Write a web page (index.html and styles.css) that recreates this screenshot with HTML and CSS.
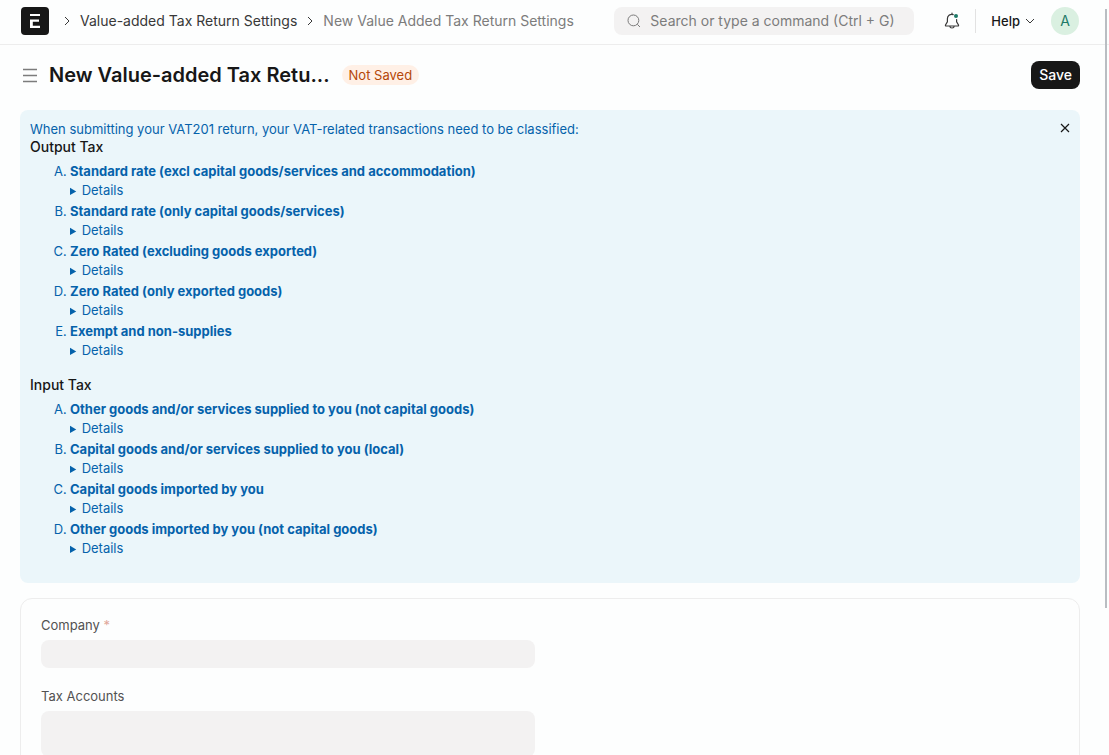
FILE: index.html
```html
<!DOCTYPE html>
<html lang="en">
<head>
<meta charset="utf-8">
<meta name="viewport" content="width=device-width, initial-scale=1">
<title>New Value-added Tax Return Settings</title>
<link rel="stylesheet" href="styles.css">
</head>
<body>
<header class="navbar">
  <a class="logo" href="#" aria-label="Home">
    <svg width="28" height="28" viewBox="0 0 28 28"><rect width="28" height="28" rx="4" fill="#171717"/><path d="M9 7h10v2H9zM9 12.5h9v2.3h-6.2v4H19V21H9z" fill="#fff"/></svg>
  </a>
  <nav class="breadcrumbs" aria-label="Breadcrumb">
    <svg class="crumb-arrow" width="6" height="10" viewBox="0 0 6 10"><path d="M1 1l4 4-4 4"/></svg>
    <a href="#">Value-added Tax Return Settings</a>
    <svg class="crumb-arrow" width="6" height="10" viewBox="0 0 6 10"><path d="M1 1l4 4-4 4"/></svg>
    <a class="current" href="#" aria-current="page">New Value Added Tax Return Settings</a>
  </nav>
  <div class="nav-tools">
    <label class="search">
      <svg width="14" height="14" viewBox="0 0 14 14"><circle cx="6.4" cy="6.4" r="5.4"/><path d="M10.3 10.3l2.7 2.7"/></svg>
      <input type="text" aria-label="Search" placeholder="Search or type a command (Ctrl + G)">
    </label>
    <button class="bell" type="button" aria-label="Notifications">
      <svg width="16" height="18" viewBox="0 0 16 18"><path d="M9.2 2.6C5.8 1.7 3.4 3.9 3.4 6.8v3L1.5 13c-.2.6 0 1 .6 1h11.8c.6 0 .8-.4.6-1l-1.9-3.2V7.6M8 2.2V1M5.8 14.2c.2 2.4 4.2 2.4 4.4 0" fill="none" stroke="#383838" stroke-width="1.2" stroke-linecap="round"/><circle cx="12" cy="4" r="2" fill="#1e7a68"/></svg>
    </button>
    <button class="help" type="button">Help <svg width="10" height="6" viewBox="0 0 10 6"><path d="M1 1l4 4 4-4"/></svg></button>
    <button class="avatar" type="button" aria-label="Account">A</button>
  </div>
</header>
<main class="page">
  <div class="page-head">
    <button class="menu" type="button" aria-label="Toggle sidebar"><svg width="14" height="15" viewBox="0 0 14 15"><path d="M0 1.5h14M0 7.5h14M0 13.5h14"/></svg></button>
    <h1>New Value-added Tax Retu...</h1>
    <span class="pill">Not Saved</span>
    <button class="save" type="button">Save</button>
  </div>
  <section class="message">
    <button class="close" type="button" aria-label="Close"><svg width="10" height="10" viewBox="0 0 10 10"><path d="M1 1l8 8M9 1L1 9"/></svg></button>
    <p>When submitting your VAT201 return, your VAT-related transactions need to be classified:</p>
    <h2>Output Tax</h2>
    <ol>
      <li><strong>Standard rate (excl capital goods/services and accommodation)</strong><details><summary>Details</summary></details></li>
      <li><strong>Standard rate (only capital goods/services)</strong><details><summary>Details</summary></details></li>
      <li><strong>Zero Rated (excluding goods exported)</strong><details><summary>Details</summary></details></li>
      <li><strong>Zero Rated (only exported goods)</strong><details><summary>Details</summary></details></li>
      <li><strong>Exempt and non-supplies</strong><details><summary>Details</summary></details></li>
    </ol>
    <h2>Input Tax</h2>
    <ol>
      <li><strong>Other goods and/or services supplied to you (not capital goods)</strong><details><summary>Details</summary></details></li>
      <li><strong>Capital goods and/or services supplied to you (local)</strong><details><summary>Details</summary></details></li>
      <li><strong>Capital goods imported by you</strong><details><summary>Details</summary></details></li>
      <li><strong>Other goods imported by you (not capital goods)</strong><details><summary>Details</summary></details></li>
    </ol>
  </section>
  <form class="form">
    <div class="fields">
      <label for="company">Company <span class="required">*</span></label>
      <input id="company" type="text">
      <label for="accounts">Tax Accounts</label>
      <textarea id="accounts"></textarea>
    </div>
  </form>
</main>
<div class="scroll-thumb"></div>
</body>
</html>
```
FILE: styles.css
```css
* { box-sizing: border-box; }
html { scrollbar-width: none; }
body {
  margin: 0;
  padding-right: 9px;
  background: #fdfefe;
  color: #171717;
  font: 13px/20px Inter, sans-serif;
}
button { font: inherit; color: inherit; background: none; border: 0; padding: 0; cursor: pointer; }
a { color: inherit; text-decoration: none; }
svg { display: block; flex: none; }

.navbar {
  display: flex;
  align-items: center;
  margin-right: -9px;
  padding: 7px 30px 9px 21px;
  border-bottom: 1px solid #ededed;
}
.breadcrumbs { display: flex; align-items: center; gap: 10px; margin-left: 15px; color: #383838; font-size: 14px; white-space: nowrap; }
.breadcrumbs .current { color: #7c7c7c; }
.crumb-arrow { fill: none; stroke: #383838; }
.nav-tools { display: flex; align-items: center; margin-left: auto; }
.search {
  display: flex;
  align-items: center;
  gap: 9px;
  width: 300px;
  height: 28px;
  padding: 0 13px;
  border-radius: 8px;
  background: #f3f2f2;
}
.search svg { fill: none; stroke: #7c7c7c; }
.search input { flex: 1; min-width: 0; padding: 0; border: 0; background: none; font: inherit; font-size: 14px; outline: 0; }
.search input::placeholder { color: #7c7c7c; opacity: 1; }
.bell { margin: 0 15px 0 30px; }
.help { display: flex; align-items: center; gap: 5px; height: 24px; padding: 0 16px 0 15px; border-left: 1px solid #e2e2e2; font-weight: 500; }
.help svg { fill: none; stroke: #383838; }
.avatar { width: 28px; height: 28px; border-radius: 50%; background: #daf0e1; color: #1e7a68; font-size: 14px; }

.page { padding: 0 20px; }
.page-head { display: flex; align-items: center; height: 65px; padding-bottom: 5px; }
.menu { margin: 0 12px 0 3px; }
.menu svg { stroke: #7c7c7c; stroke-width: 1.5; }
h1 { margin: 0 12px 0 0; font-size: 20px; line-height: 30px; font-weight: 600; white-space: nowrap; }
.pill { padding: 0 7px; border-radius: 10px; background: #fff0e6; color: #b54708; }
.save { height: 28px; margin-left: auto; padding: 0 8px; border-radius: 8px; background: #171717; color: #fff; font-size: 14px; font-weight: 500; }

.message { position: relative; padding: 9px 10px 8px; border-radius: 8px; background: #ebf6fa; color: #0562ab; }
.close { position: absolute; top: 13px; right: 10px; }
.close svg { stroke: #171717; stroke-width: 1.2; }
.message p { margin: 0; }
h2 { margin: 0; color: #171717; font-size: 14px; line-height: 16px; font-weight: 500; }
ol { margin: 6px 0 16px; padding-left: 40px; list-style: upper-alpha; }
strong { font-weight: 700; }
summary { line-height: 19px; cursor: pointer; }
summary::marker { font-size: 11px; }

.form { margin-top: 15px; padding: 16px 20px 20px; border: 1px solid #ededed; border-radius: 12px; }
.fields { display: flex; flex-direction: column; width: 494px; max-width: 100%; color: #525252; }
.fields label { margin-bottom: 5px; }
.required { color: #e0a79a; }
.fields input, .fields textarea { width: 100%; height: 28px; margin: 0 0 18px; padding: 6px 8px; border: 0; border-radius: 8px; background: #f3f2f2; font: inherit; resize: none; }
.fields textarea { height: 46px; }
.scroll-thumb { position: fixed; top: 9px; right: 2px; width: 2px; height: 599px; background: #b9bdc2; }
```
